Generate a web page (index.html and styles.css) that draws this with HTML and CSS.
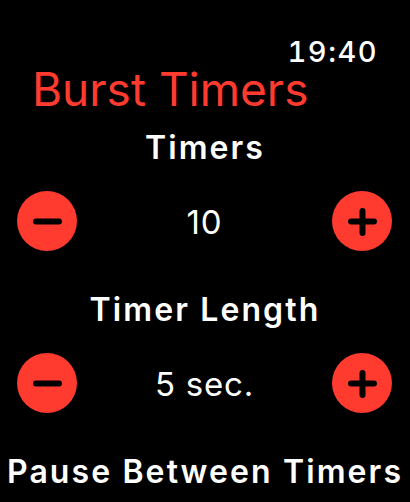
FILE: index.html
```html
<!DOCTYPE html>
<html lang="en">
<head>
  <meta charset="UTF-8" />
  <meta name="viewport" content="width=device-width, initial-scale=1.0"/>
  <title>Burst Timers</title>
  <link rel="stylesheet" href="styles.css">
</head>
<body>
  <div class="screen">
    <div class="clock">19:40</div>
    <h1 class="title">Burst Timers</h1>

    <div class="label">Timers</div>
    <div class="stepper">
      <button class="step" aria-label="Fewer timers">
        <svg viewBox="0 0 60 60"><circle cx="30" cy="30" r="30"/><path d="M19 30.5h23"/></svg>
      </button>
      <span class="value">10</span>
      <button class="step" aria-label="More timers">
        <svg viewBox="0 0 60 60"><circle cx="30" cy="30" r="30"/><path d="M19 30.5h23M30.5 20v22"/></svg>
      </button>
    </div>

    <div class="label">Timer Length</div>
    <div class="stepper">
      <button class="step" aria-label="Shorter">
        <svg viewBox="0 0 60 60"><circle cx="30" cy="30" r="30"/><path d="M19 30.5h23"/></svg>
      </button>
      <span class="value">5 sec.</span>
      <button class="step" aria-label="Longer">
        <svg viewBox="0 0 60 60"><circle cx="30" cy="30" r="30"/><path d="M19 30.5h23M30.5 20v22"/></svg>
      </button>
    </div>

    <div class="label">Pause Between Timers</div>
  </div>
</body>
</html>
```

FILE: styles.css
```css
:root {
  --red: #ff3b30;
  --text: #fff;
}
* {
  margin: 0;
  padding: 0;
  box-sizing: border-box;
}
html, body {
  width: 100%;
  height: 100%;
  overflow: hidden;
  background: #000;
  color: var(--text);
  font-family: "Inter", "Noto Sans", sans-serif;
}
.screen {
  display: flex;
  flex-direction: column;
  padding-top: 38px;
}
.clock {
  align-self: flex-end;
  padding-right: 32px;
  font-size: 29px;
  line-height: 28px;
  font-weight: 500;
  font-variant-numeric: tabular-nums;
  letter-spacing: 1.5px;
}
.title {
  padding-left: 32px;
  color: var(--red);
  font-size: 46px;
  line-height: 46px;
  font-weight: 400;
}
.label {
  margin-top: 19px;
  text-align: center;
  font-size: 32px;
  line-height: 34px;
  font-weight: 600;
  letter-spacing: 2.1px;
  white-space: nowrap;
}
.stepper + .label {
  margin-top: 0;
}
.stepper {
  display: flex;
  align-items: center;
  justify-content: space-between;
  height: 60px;
  margin: 26px 0 42px;
  padding: 0 18px 0 17px;
}
.step {
  width: 60px;
  height: 60px;
  border: none;
  background: none;
  cursor: pointer;
}
.step svg {
  display: block;
  width: 60px;
  height: 60px;
}
.step circle {
  fill: var(--red);
}
.step path {
  fill: none;
  stroke: #000;
  stroke-width: 6;
  stroke-linecap: round;
}
.value {
  padding-top: 3px;
  font-size: 33px;
  line-height: 33px;
  font-weight: 400;
  letter-spacing: 0.8px;
}
```
